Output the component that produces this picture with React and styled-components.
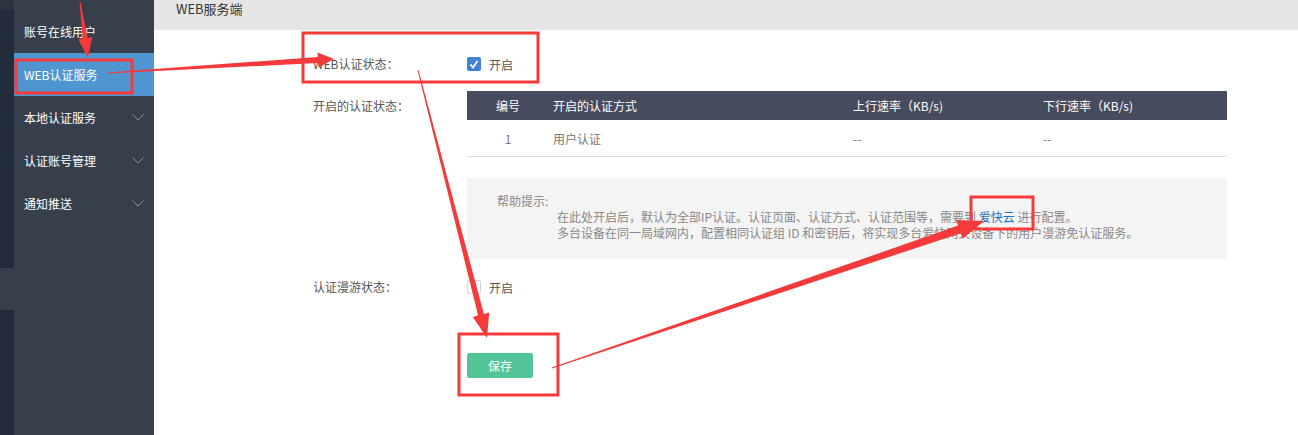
import React from "react";
import styled, { createGlobalStyle } from "styled-components";

const GlobalStyle = createGlobalStyle`
  html, body {
    margin: 0;
    padding: 0;
    background: #fff;
  }
  body {
    font-family: "Noto Sans CJK SC", "Liberation Sans", sans-serif;
    font-size: 12px;
    color: #555;
  }
`;

const Page = styled.div`
  position: relative;
  display: flex;
  width: 1298px;
  height: 435px;
  overflow: hidden;
`;

const Strip = styled.div`
  width: 14px;
  display: flex;
  flex-direction: column;
`;

const StripPart = styled.div`
  height: ${(p) => (p.h ? `${p.h}px` : "auto")};
  flex: ${(p) => (p.h ? "none" : 1)};
  background: ${(p) => p.color};
`;

const Sidebar = styled.nav`
  width: 140px;
  background: #363f4b;
  padding-top: 10px;
  display: flex;
  flex-direction: column;
`;

const MenuItem = styled.div`
  height: 43px;
  display: flex;
  align-items: center;
  justify-content: space-between;
  padding: 0 10px 0 10px;
  color: #fff;
  font-size: 12px;
  background: ${(p) => (p.active ? "#4f96d1" : "transparent")};
`;

const Chevron = () => (
  <svg width="12" height="7" viewBox="0 0 12 7">
    <polyline points="0.5,0.5 6,6 11.5,0.5" fill="none" stroke="#8a919a" strokeWidth="1" />
  </svg>
);

const Main = styled.main`
  flex: 1;
  display: flex;
  flex-direction: column;
`;

const Header = styled.header`
  height: 30px;
  box-sizing: border-box;
  background: #e6e6e6;
  padding: 1px 0 0 22px;
  font-size: 13px;
  line-height: 16px;
  color: #333;
`;

const Content = styled.section`
  padding: 20px 71px 0 159px;
  display: flex;
  flex-direction: column;
`;

const FormRow = styled.div`
  display: grid;
  grid-template-columns: 154px 1fr;
  align-items: ${(p) => (p.top ? "start" : "center")};
  margin-top: ${(p) => p.mt || 0}px;
`;

const Label = styled.div`
  color: #555;
  font-size: 12px;
  line-height: ${(p) => p.lh || 28}px;
  height: 28px;
`;

const CheckLine = styled.label`
  display: flex;
  align-items: center;
  gap: 8px;
  height: 28px;
  color: #555;
`;

const Box = styled.span`
  width: 14px;
  height: 14px;
  box-sizing: border-box;
  border-radius: 2px;
  display: inline-flex;
  align-items: center;
  justify-content: center;
  background: ${(p) => (p.checked ? "#3f82d6" : "#fff")};
  border: 1px solid ${(p) => (p.checked ? "#3f82d6" : "#d4d4d4")};
`;

const Table = styled.div`
  display: flex;
  flex-direction: column;
`;

const TRow = styled.div`
  display: grid;
  grid-template-columns: 82px 300px 190px 1fr;
  align-items: center;
  height: ${(p) => (p.head ? 29 : 36)}px;
  background: ${(p) => (p.head ? "#464b5d" : "#fff")};
  color: ${(p) => (p.head ? "#fff" : "#777")};
  border-bottom: ${(p) => (p.head ? "none" : "1px solid #dcdcdc")};
`;

const Cell = styled.div`
  padding-left: ${(p) => (p.center ? 0 : 4)}px;
  text-align: ${(p) => (p.center ? "center" : "left")};
  white-space: nowrap;
`;

const Help = styled.div`
  margin-top: 21px;
  margin-left: 154px;
  background: #f4f4f4;
  padding: 15px 0 18px 30px;
  color: #888;
  line-height: 16px;
  font-size: 12px;
`;

const HelpLines = styled.div`
  padding-left: 60px;
`;

const Link = styled.a`
  color: #1f73c4;
  text-decoration: none;
`;

const SaveButton = styled.button`
  margin-top: 52px;
  margin-left: 154px;
  width: 66px;
  height: 25px;
  border: none;
  border-radius: 2px;
  background: #52c498;
  color: #fff;
  font-family: inherit;
  font-size: 12px;
  cursor: pointer;
`;

const Overlay = styled.svg`
  position: absolute;
  left: 0;
  top: 0;
  pointer-events: none;
`;

const RED = "#f43a3a";

function arrowPoints([x1, y1], [x2, y2], { tail, neck, headW, headL }) {
  const dx = x2 - x1;
  const dy = y2 - y1;
  const len = Math.hypot(dx, dy);
  const ux = dx / len;
  const uy = dy / len;
  const nx = -uy;
  const ny = ux;
  const bx = x2 - ux * headL;
  const by = y2 - uy * headL;
  const pts = [
    [x1 + (nx * tail) / 2, y1 + (ny * tail) / 2],
    [bx + (nx * neck) / 2, by + (ny * neck) / 2],
    [bx + (nx * headW) / 2, by + (ny * headW) / 2],
    [x2, y2],
    [bx - (nx * headW) / 2, by - (ny * headW) / 2],
    [bx - (nx * neck) / 2, by - (ny * neck) / 2],
    [x1 - (nx * tail) / 2, y1 - (ny * tail) / 2],
  ];
  return pts.map((p) => p.map((v) => v.toFixed(1)).join(",")).join(" ");
}

// red hand-drawn marks on the screenshot
const arrows = [
  { from: [80, 2], to: [88, 58], tail: 1, neck: 5, headW: 14, headL: 20 },
  { from: [107, 73], to: [334, 59], tail: 1, neck: 6, headW: 15, headL: 16 },
  { from: [418, 70], to: [487, 338], tail: 1, neck: 6, headW: 17, headL: 24 },
  { from: [552, 368], to: [984, 221], tail: 1, neck: 8, headW: 20, headL: 26 },
];

const boxes = [
  { x: 16, y: 60, w: 116, h: 33 },
  { x: 303, y: 33, w: 235, h: 49 },
  { x: 971, y: 197, w: 62, h: 32 },
  { x: 459, y: 334, w: 99, h: 61 },
];

const Annotations = () => (
  <Overlay width="1298" height="435" viewBox="0 0 1298 435">
    {boxes.map((b, i) => (
      <rect key={i} x={b.x} y={b.y} width={b.w} height={b.h} fill="none" stroke={RED} strokeWidth="3" />
    ))}
    {arrows.map((a, i) => (
      <polygon key={i} points={arrowPoints(a.from, a.to, a)} fill={RED} />
    ))}
  </Overlay>
);

const menu = [
  { name: "账号在线用户" },
  { name: "WEB认证服务", active: true },
  { name: "本地认证服务", sub: true },
  { name: "认证账号管理", sub: true },
  { name: "通知推送", sub: true },
];

export default function App() {
  return (
    <Page>
      <GlobalStyle />
      <Strip>
        <StripPart h={10} color="#2b3541" />
        <StripPart h={258} color="#222c3a" />
        <StripPart h={42} color="#363f4b" />
        <StripPart color="#222c3a" />
      </Strip>
      <Sidebar>
        {menu.map((m) => (
          <MenuItem key={m.name} active={m.active}>
            <span>{m.name}</span>
            {m.sub && <Chevron />}
          </MenuItem>
        ))}
      </Sidebar>
      <Main>
        <Header>WEB服务端</Header>
        <Content>
          <FormRow>
            <Label>WEB认证状态：</Label>
            <CheckLine>
              <Box checked>
                <svg width="10" height="9" viewBox="0 0 10 9">
                  <polyline points="1.5,4.5 4,7.5 8.5,1" fill="none" stroke="#fff" strokeWidth="1.8" />
                </svg>
              </Box>
              开启
            </CheckLine>
          </FormRow>
          <FormRow top mt={13}>
            <Label lh={29}>开启的认证状态：</Label>
            <Table>
              <TRow head>
                <Cell center>编号</Cell>
                <Cell>开启的认证方式</Cell>
                <Cell>上行速率（KB/s)</Cell>
                <Cell>下行速率（KB/s)</Cell>
              </TRow>
              <TRow>
                <Cell center>1</Cell>
                <Cell>用户认证</Cell>
                <Cell>--</Cell>
                <Cell>--</Cell>
              </TRow>
            </Table>
          </FormRow>
          <Help>
            <div>帮助提示:</div>
            <HelpLines>
              <div>
                在此处开启后，默认为全部IP认证。认证页面、认证方式、认证范围等，需要到 <Link>爱快云</Link> 进行配置。
              </div>
              <div>多台设备在同一局域网内，配置相同认证组 ID 和密钥后，将实现多台爱快网关设备下的用户漫游免认证服务。</div>
            </HelpLines>
          </Help>
          <FormRow mt={14}>
            <Label>认证漫游状态：</Label>
            <CheckLine>
              <Box />
              开启
            </CheckLine>
          </FormRow>
          <SaveButton>保存</SaveButton>
        </Content>
      </Main>
      <Annotations />
    </Page>
  );
}
